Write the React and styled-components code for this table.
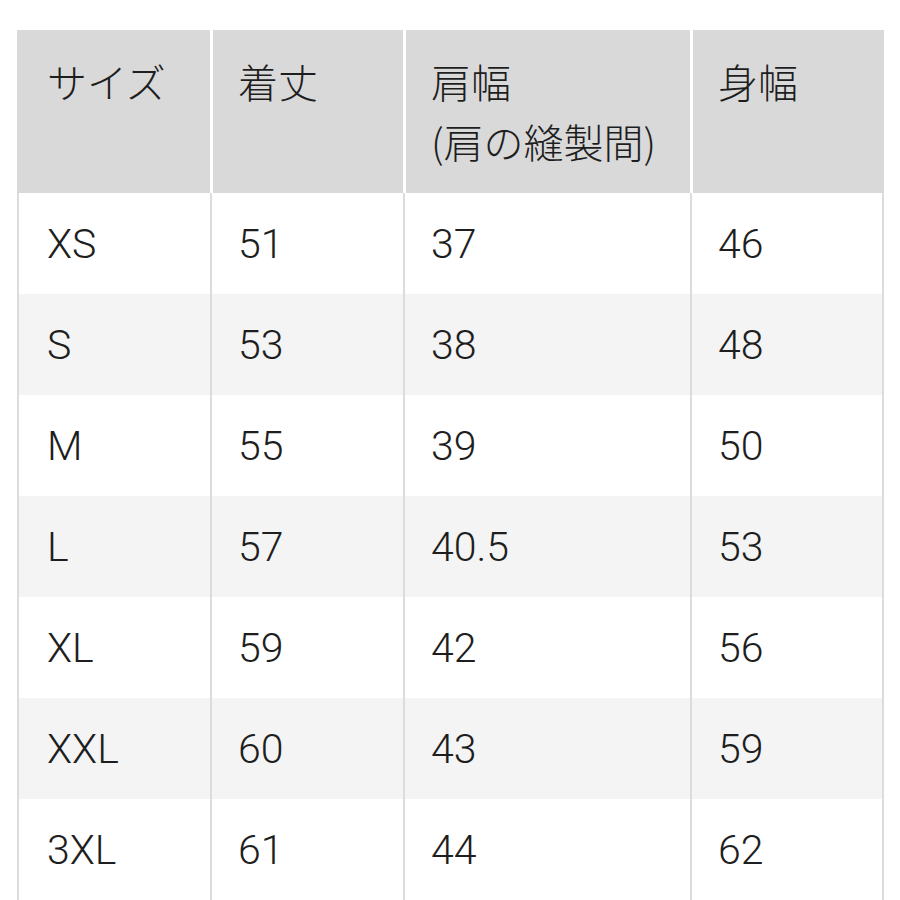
import React from "react";
import styled, { createGlobalStyle } from "styled-components";

const Global = createGlobalStyle`
  html, body { margin: 0; padding: 0; background: #ffffff; }
  body { font-family: Roboto, "Liberation Sans", "Noto Sans CJK JP", sans-serif; }
`;

const Page = styled.div`
  padding: 30px 0 0 17px;
`;

const Grid = styled.div`
  display: grid;
  grid-template-columns: 193px 193px 287px 194px;
  width: 867px;
  color: #1e1e1e;
`;

const HeadCell = styled.div`
  box-sizing: border-box;
  height: 163px;
  background: #d9d9d9;
  border-left: ${(p) => (p.$first ? "none" : "3px solid #ffffff")};
  padding: 21px 0 0 ${(p) => (p.$first ? 30 : 25)}px;
  font-family: "Noto Sans CJK JP", sans-serif;
  font-weight: 300;
  font-size: 40px;
  line-height: 60px;
  white-space: nowrap;
`;

const Cell = styled.div`
  box-sizing: border-box;
  height: 101px;
  display: flex;
  align-items: center;
  background: ${(p) => (p.$alt ? "#f4f4f4" : "#ffffff")};
  border-left: 2px solid #dcdcdc;
  border-right: ${(p) => (p.$last ? "2px solid #dcdcdc" : "none")};
  padding-left: ${(p) => (p.$first ? 28 : 26)}px;
  font-family: Roboto, "Liberation Sans", sans-serif;
  font-weight: 300;
  font-size: 41px;
`;

const headers = ["サイズ", "着丈", ["肩幅", "(肩の縫製間)"], "身幅"];
const rows = [
  ["XS", "51", "37", "46"],
  ["S", "53", "38", "48"],
  ["M", "55", "39", "50"],
  ["L", "57", "40.5", "53"],
  ["XL", "59", "42", "56"],
  ["XXL", "60", "43", "59"],
  ["3XL", "61", "44", "62"],
];

export default function App() {
  return (
    <>
      <Global />
      <Page>
        <Grid>
          {headers.map((h, i) => (
            <HeadCell key={i} $first={i === 0}>
              {Array.isArray(h) ? h.map((l) => <div key={l}>{l}</div>) : h}
            </HeadCell>
          ))}
          {rows.map((r, ri) =>
            r.map((v, ci) => (
              <Cell
                key={ri + "-" + ci}
                $alt={ri % 2 === 1}
                $first={ci === 0}
                $last={ci === 3}
              >
                {v}
              </Cell>
            ))
          )}
        </Grid>
      </Page>
    </>
  );
}
